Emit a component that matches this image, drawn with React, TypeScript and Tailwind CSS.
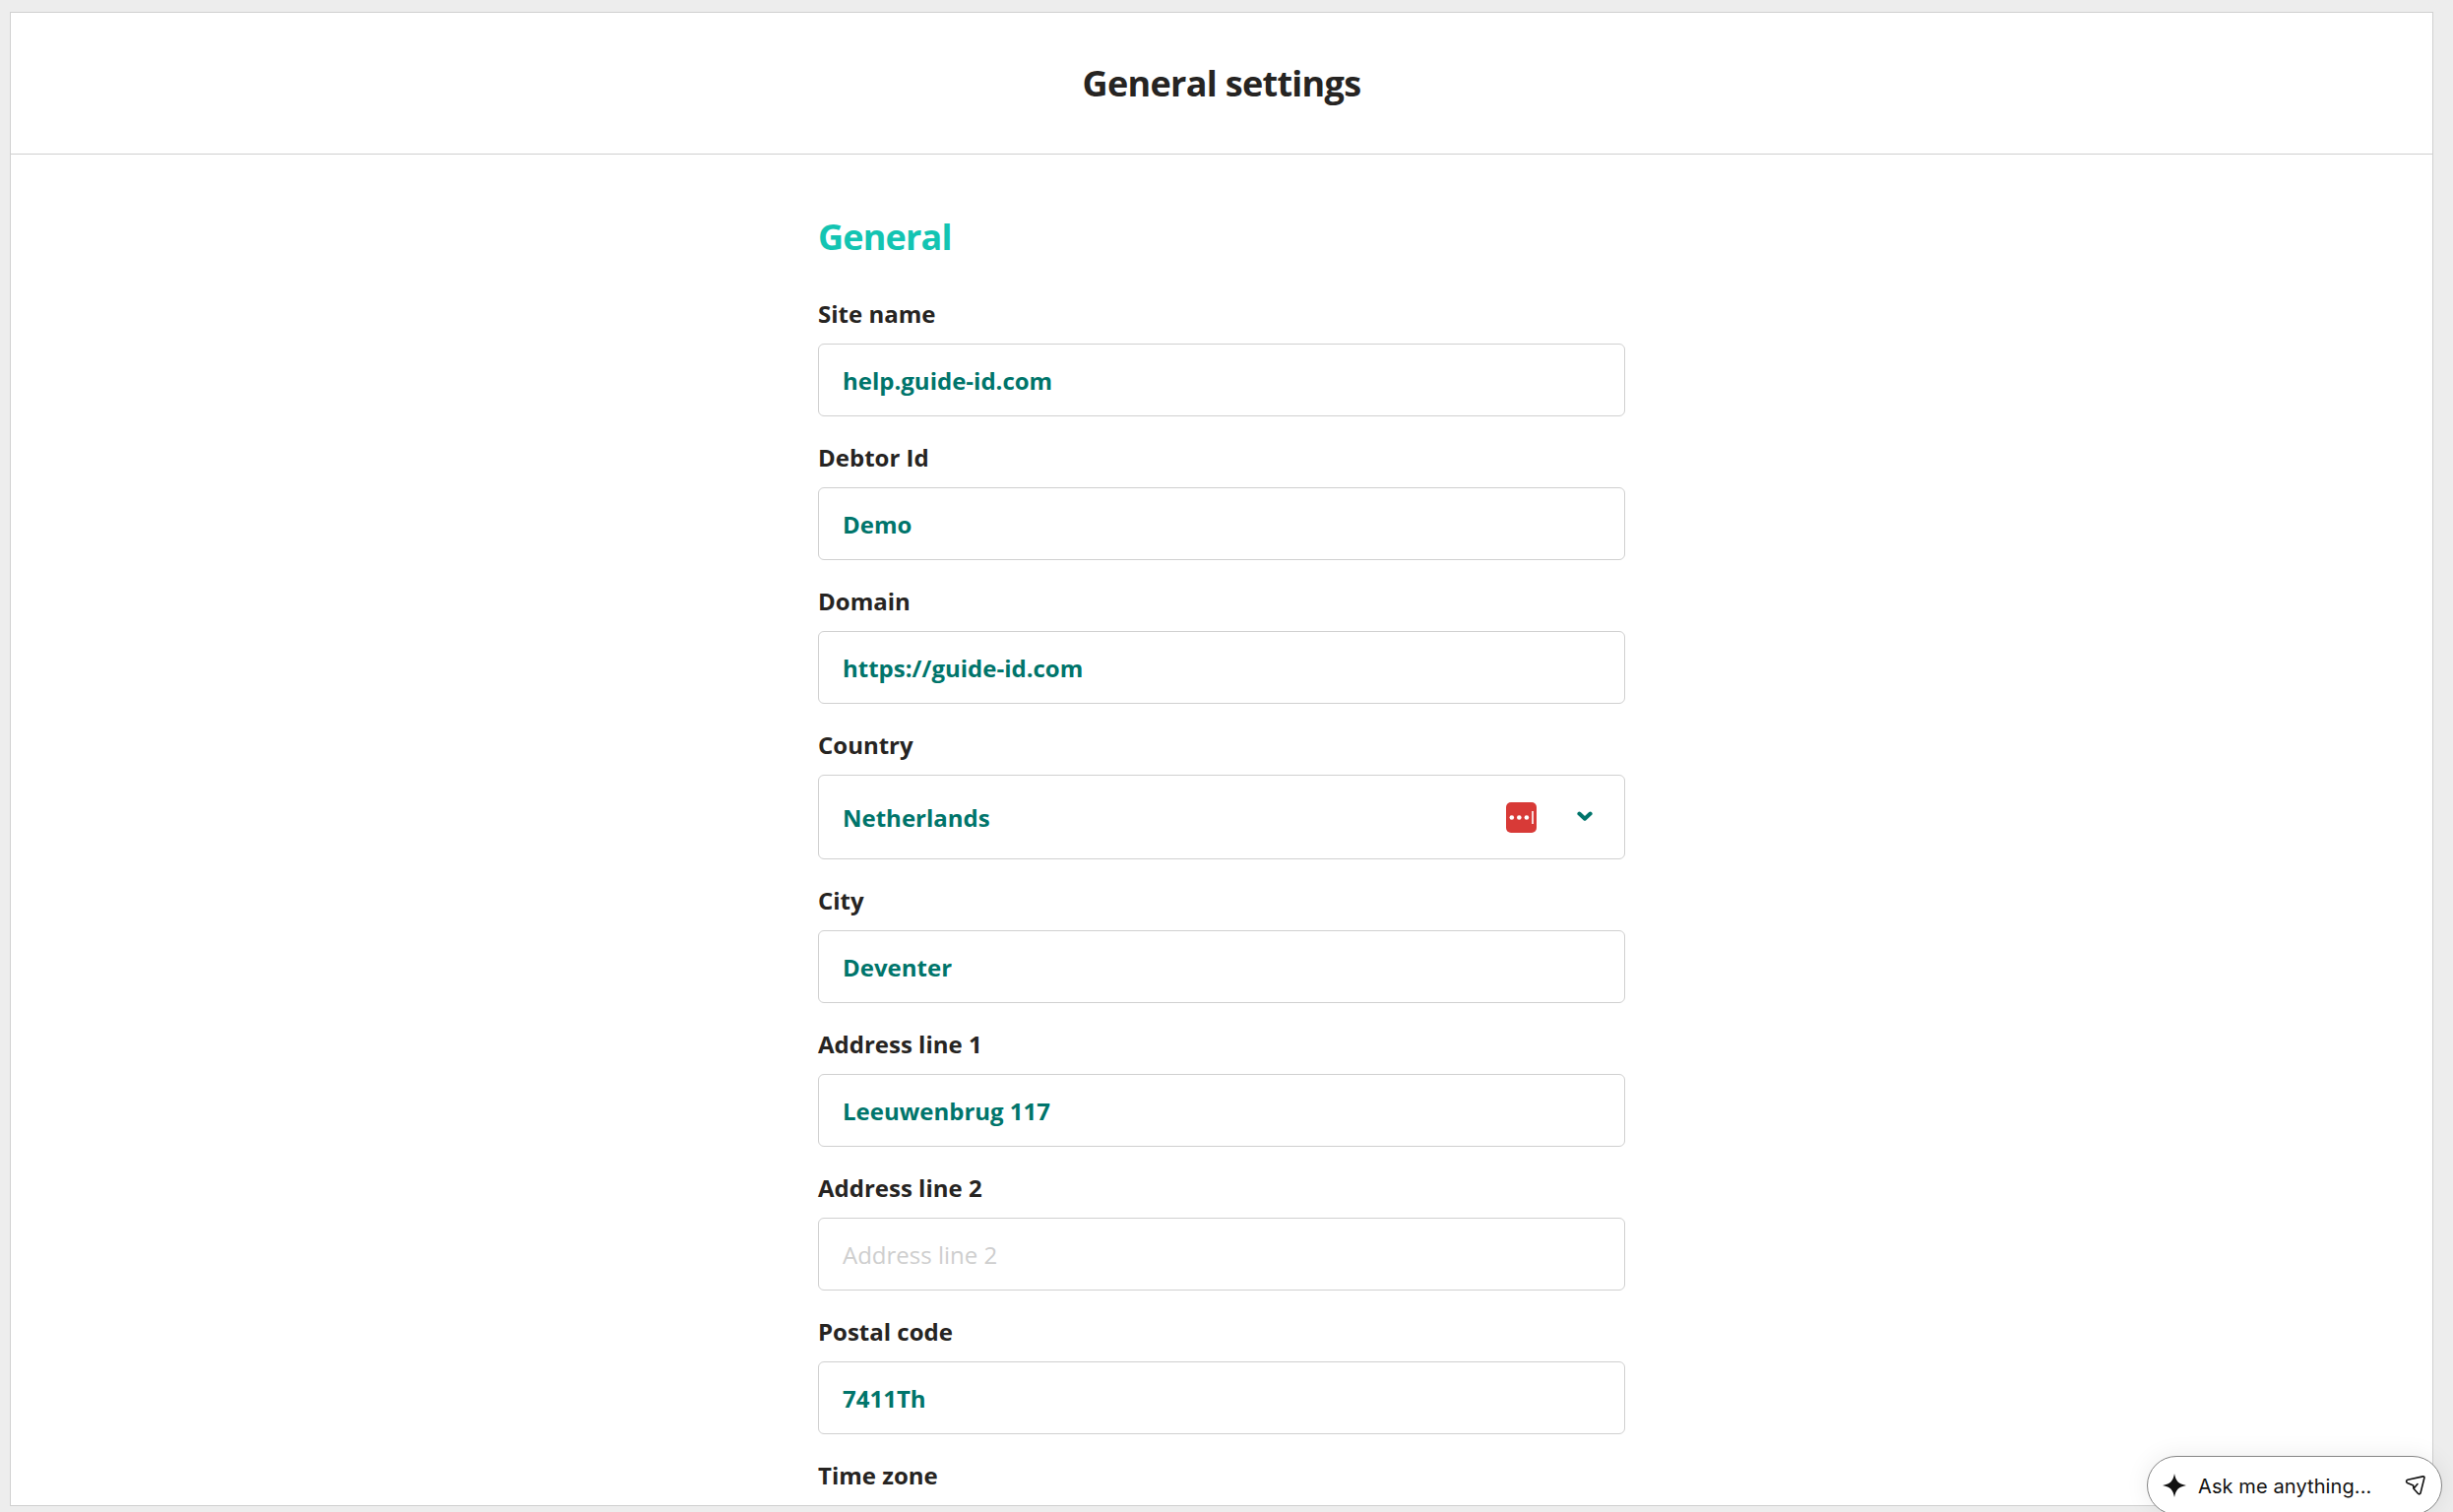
interface IField {
  label: string;
  value?: string;
  placeholder?: string;
  type?: "text" | "select";
}

const fields: IField[] = [
  { label: "Site name", value: "help.guide-id.com" },
  { label: "Debtor Id", value: "Demo" },
  { label: "Domain", value: "https://guide-id.com" },
  { label: "Country", value: "Netherlands", type: "select" },
  { label: "City", value: "Deventer" },
  { label: "Address line 1", value: "Leeuwenbrug 117" },
  { label: "Address line 2", placeholder: "Address line 2" },
  { label: "Postal code", value: "7411Th" },
];

const PasswordIcon = () => (
  <svg className="w-[31px] h-[31px]" viewBox="0 0 31 31">
    <rect width="31" height="31" rx="5" fill="#d83a37" />
    <circle cx="5.8" cy="15.5" r="2.3" fill="#fff" />
    <circle cx="13.3" cy="15.5" r="2.3" fill="#fff" />
    <circle cx="20.9" cy="15.5" r="2.3" fill="#fff" />
    <rect x="26.2" y="9" width="1.6" height="13" fill="#fff" />
  </svg>
);

const ChevronIcon = () => (
  <svg className="w-4 h-[11px]" viewBox="0 0 16 11" fill="none">
    <path
      d="M2.4 2.6 8 7.7l5.6-5.1"
      stroke="#00756b"
      strokeWidth="4"
      strokeLinecap="round"
      strokeLinejoin="round"
    />
  </svg>
);

const Field = ({ label, value, placeholder, type = "text" }: IField) => (
  <div>
    <div className="h-[72px] pt-[25px] text-2xl leading-[34px] font-bold text-[#262422]">
      {label}
    </div>
    {type === "select" ? (
      <div className="h-[86px] flex items-center border border-[#d0d0d0] rounded-md pl-6 pr-8">
        <span className="grow pt-0.5 text-2xl font-bold text-[#00756b]">
          {value}
        </span>
        <PasswordIcon />
        <span className="ml-[41px] -mt-0.5">
          <ChevronIcon />
        </span>
      </div>
    ) : (
      <div className="h-[74px] flex items-center border border-[#d0d0d0] rounded-md px-6 pt-0.5 text-2xl">
        {value ? (
          <span className="font-bold text-[#00756b]">{value}</span>
        ) : (
          <span className="text-[#cecece]">{placeholder}</span>
        )}
      </div>
    )}
  </div>
);

const AskBar = () => (
  <div className="absolute left-[2181px] top-[1479px] w-[300px] h-[60px] flex items-center rounded-full border border-[#858585] bg-white pl-[15px] pr-[16px] shadow-[0_0_24px_rgba(0,0,0,0.08)]">
    <svg className="w-6 h-6" viewBox="0 0 24 24" fill="#111">
      <path d="M12 0c1.3 7.2 3.9 10.5 12 12-8.1 1.5-10.7 4.8-12 12-1.3-7.2-3.9-10.5-12-12C8.1 10.5 10.7 7.2 12 0Z" />
    </svg>
    <span className="ml-3 grow pt-0.5 font-['Inter',sans-serif] text-[20px] tracking-[0.1px] text-[#111] whitespace-nowrap">
      Ask me anything...
    </span>
    <svg
      className="w-5 h-5 overflow-visible"
      viewBox="0 0 20 20"
      fill="none"
      stroke="#111"
      strokeWidth="1.6"
      strokeLinecap="round"
      strokeLinejoin="round"
    >
      <path d="M2 4.3 17.5.9c.9-.2 1.6.5 1.4 1.4L15 17.7c-.3 1.2-1.7 1.5-2.5.6L8 13.2l-.4-3.3-6-2.5C.1 6.7.3 4.7 2 4.3ZM8 13.2l4-4.7" />
    </svg>
  </div>
);

const App = () => {
  return (
    <div className="relative w-[2492px] h-[1536px] overflow-hidden bg-[#ededed] pt-3 pl-2.5 font-['Open_Sans',sans-serif]">
      <div className="w-[2462px] h-[1518px] flex flex-col overflow-hidden border border-[#d0d0d0] bg-white">
        <header className="h-36 shrink-0 flex items-center justify-center border-b border-[#d0d0d0]">
          <h1 className="text-[36px] leading-[48px] font-bold tracking-[-0.7px] text-[#262422] whitespace-nowrap">
            General settings
          </h1>
        </header>
        <main className="w-[820px] mx-auto pt-[60px]">
          <h2 className="h-[60px] text-[36px] leading-[48px] font-bold tracking-[-0.8px] text-[#13c4b2]">
            General
          </h2>
          {fields.map((field) => (
            <Field key={field.label} {...field} />
          ))}
          <div className="pt-[25px] text-2xl leading-[34px] font-bold text-[#262422]">
            Time zone
          </div>
        </main>
      </div>
      <AskBar />
    </div>
  );
};

export default App;
